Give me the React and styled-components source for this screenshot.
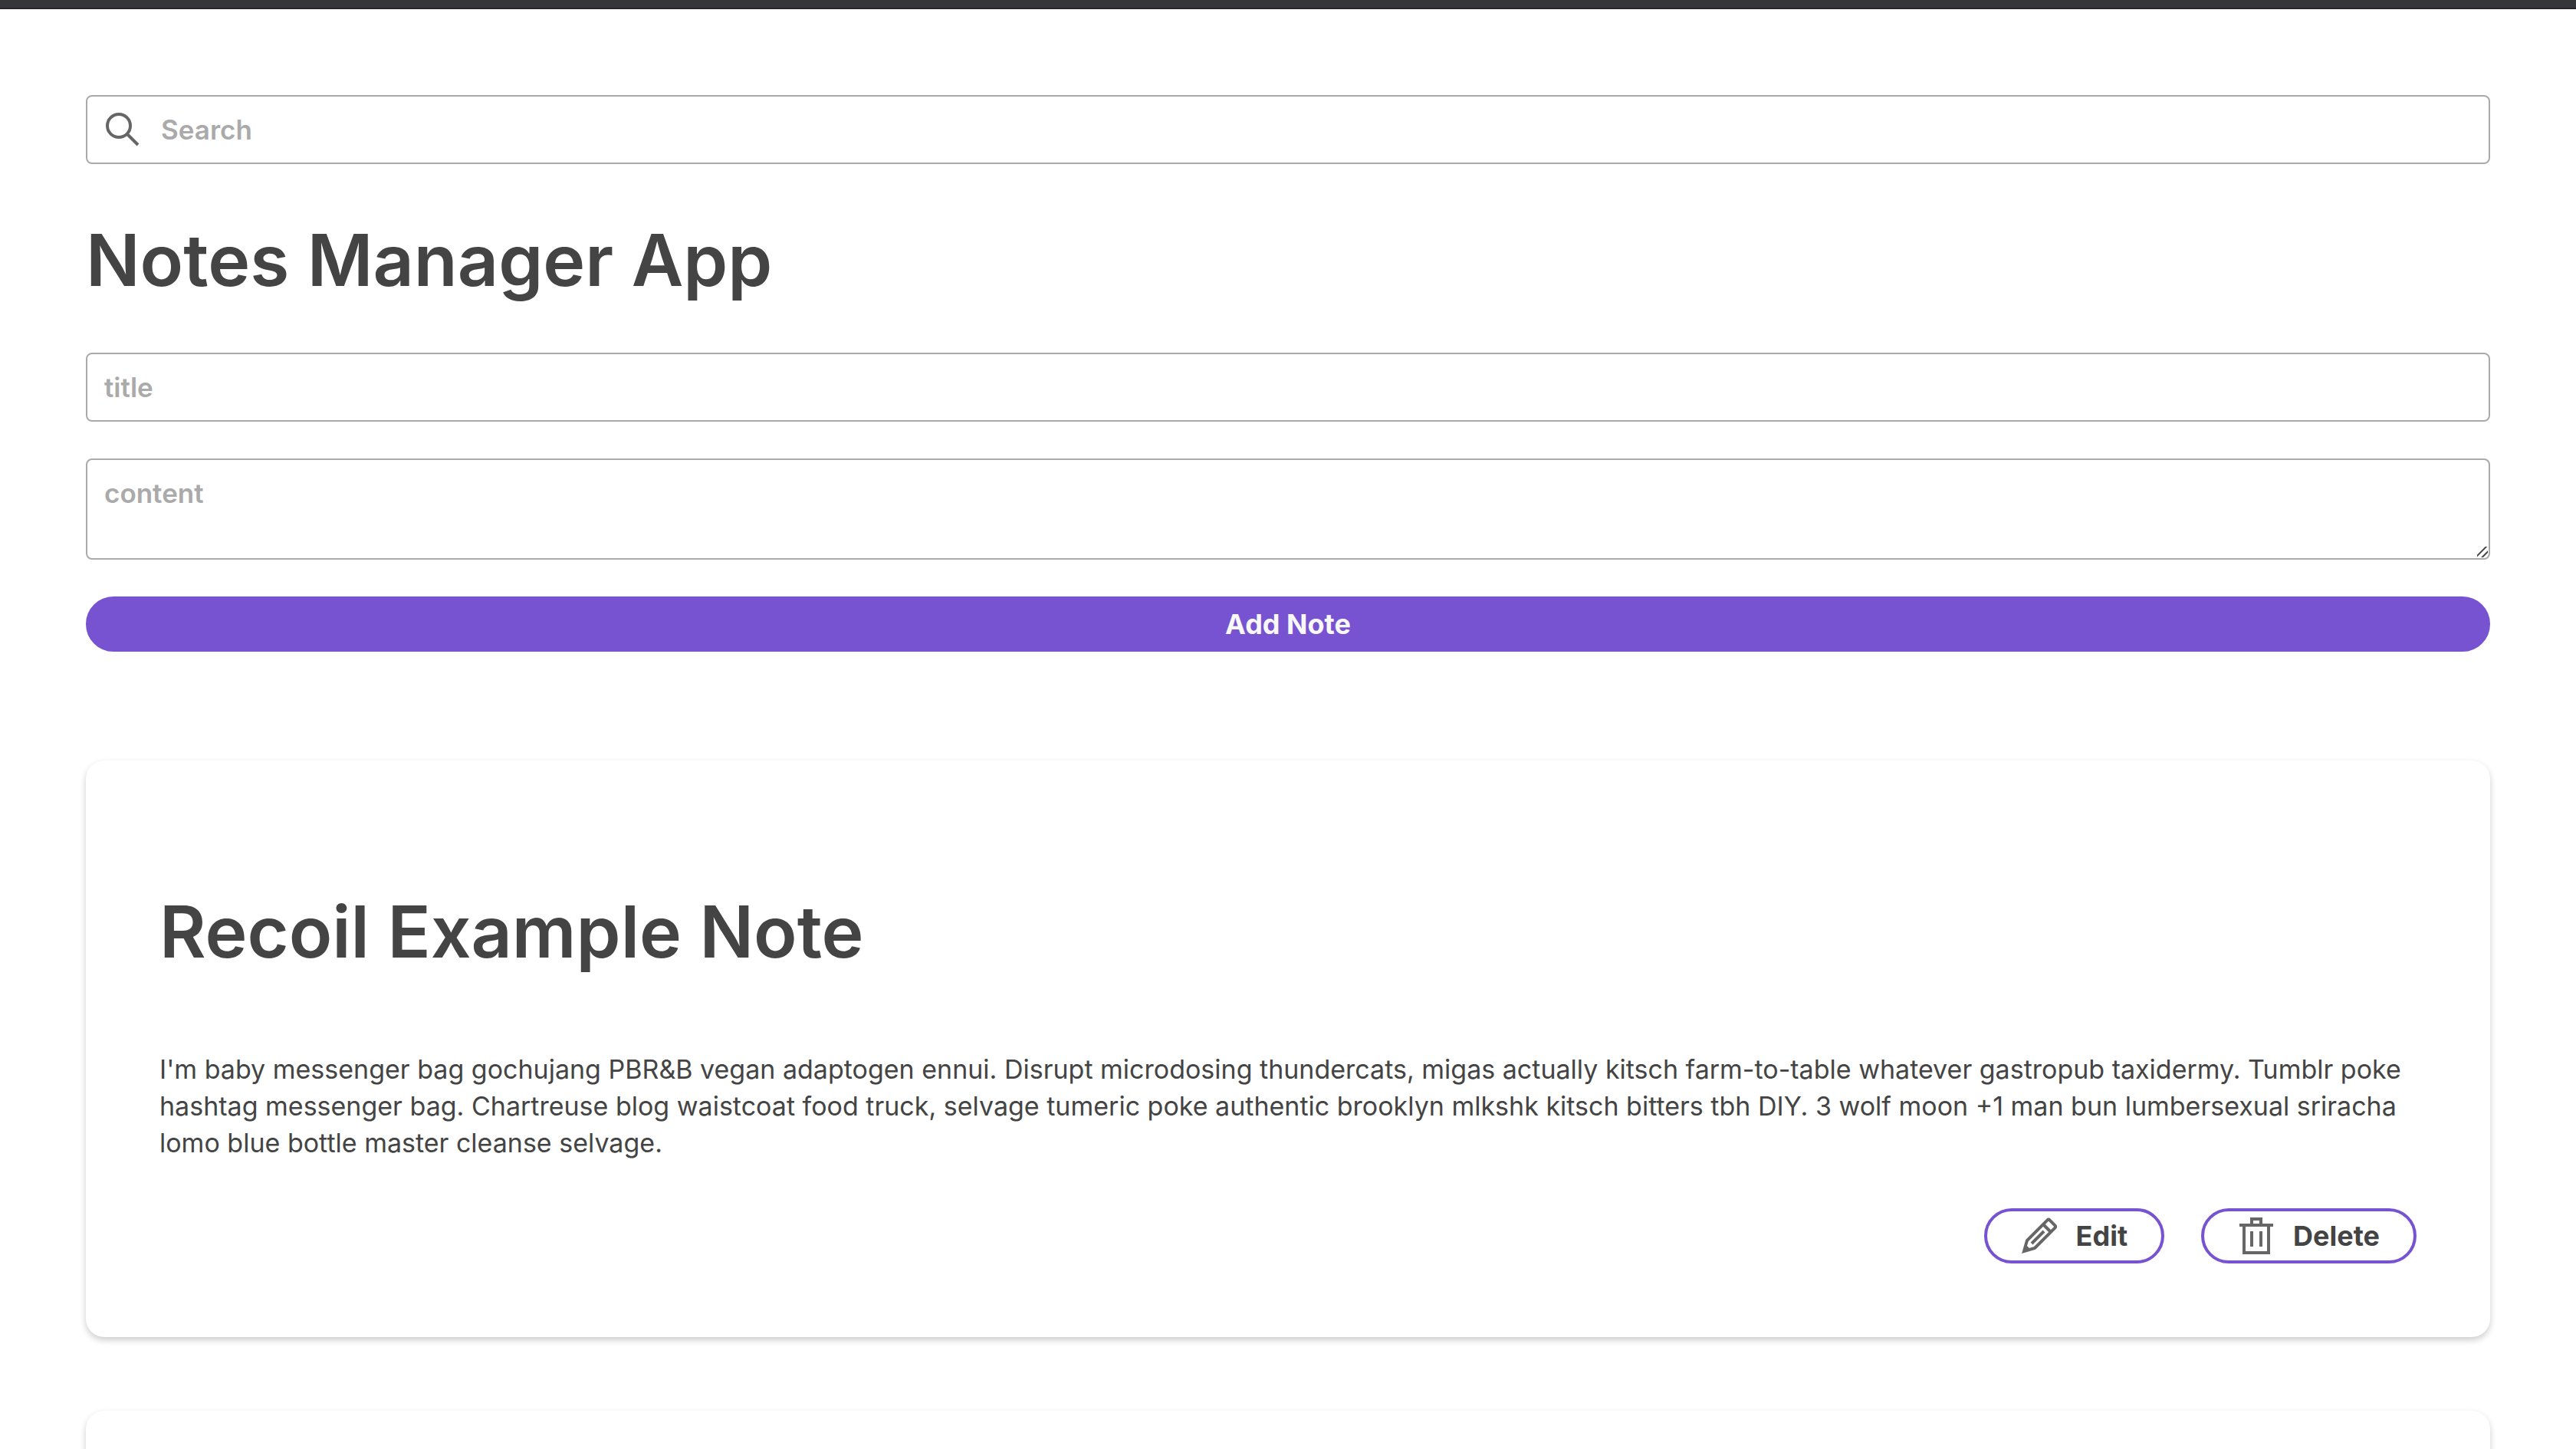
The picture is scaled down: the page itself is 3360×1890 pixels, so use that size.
import React, { useState } from "react";
import styled, { createGlobalStyle } from "styled-components";

const GlobalStyle = createGlobalStyle`
  *, *::before, *::after { box-sizing: border-box; }
  body {
    margin: 0;
    background: #ffffff;
    color: #444444;
    font-family: Inter, "Liberation Sans", sans-serif;
    font-size: 34px;
    line-height: 48px;
    overflow-x: hidden;
  }
`;

const Shell = styled.div`
  height: 100vh;
  overflow: hidden;
`;

const TopStrip = styled.div`
  height: 12px;
  background: #35363a;
  border-bottom: 2px solid #29262b;
`;

const Page = styled.main`
  padding: 112px;
`;

const SearchBox = styled.div`
  display: grid;
  align-items: center;
  > * { grid-area: 1 / 1; }
  svg { margin-left: 24px; pointer-events: none; }
`;

const Icon = styled.svg`
  width: 48px;
  height: 48px;
  flex: none;
  fill: none;
  stroke: #666666;
  stroke-width: 2;
`;

const fieldStyles = `
  display: block;
  width: 100%;
  margin: 0;
  padding: 22px;
  border: 2px solid #aaaaaa;
  border-radius: 8px;
  background: transparent;
  color: #444444;
  font: 600 35px/42px Inter, "Liberation Sans", sans-serif;
  outline: none;
  &::placeholder { color: #aaaaaa; opacity: 1; }
`;

const TextField = styled.input`
  ${fieldStyles}
  height: 90px;
  padding-left: ${(p) => (p.$withIcon ? "96px" : "22px")};
`;

const TextBox = styled.textarea`
  ${fieldStyles}
  height: 132px;
  resize: vertical;
  &::-webkit-resizer {
    background:
      linear-gradient(
        135deg,
        transparent 7px,
        #444444 8px,
        #444444 9px,
        transparent 10px,
        transparent 13px,
        #444444 14px,
        #444444 15px,
        transparent 16px
      )
      0 0 / 14px 14px no-repeat;
  }
`;

const Heading = styled.h1`
  margin: 0;
  font-size: 93px;
  font-weight: 600;
  line-height: 112px;
`;

const PageTitle = styled(Heading)`
  padding: 69px 0 65px;
`;

const Form = styled.form`
  display: grid;
  gap: 48px;
`;

const Button = styled.button`
  display: flex;
  align-items: center;
  justify-content: center;
  gap: 24px;
  height: 72px;
  padding: 0 44px;
  border: 4px solid #7753d2;
  border-radius: 36px;
  background: ${(p) => (p.$primary ? "#7753d2" : "transparent")};
  color: ${(p) => (p.$primary ? "#f8f8f8" : "#444444")};
  font: 700 36px/48px Inter, "Liberation Sans", sans-serif;
  cursor: pointer;
`;

const NoteList = styled.section`
  display: grid;
  gap: 96px;
  margin-top: 142px;
`;

const Card = styled.article`
  padding: 96px;
  border-radius: 24px;
  background: #ffffff;
  box-shadow: 0 4px 8px rgba(0, 0, 0, 0.2);
`;

const NoteTitle = styled(Heading)`
  padding: 71px 0 100px;
`;

const NoteText = styled.p`
  margin: 0 0 61px;
`;

const Actions = styled.div`
  display: flex;
  justify-content: flex-end;
  gap: 48px;
`;

const SearchIcon = () => (
  <Icon viewBox="0 0 24 24" aria-hidden="true">
    <path d="M15,15 L22,22 M9.5,17 C13.642,17 17,13.642 17,9.5 C17,5.358 13.642,2 9.5,2 C5.358,2 2,5.358 2,9.5 C2,13.642 5.358,17 9.5,17 Z" />
  </Icon>
);

const EditIcon = () => (
  <Icon viewBox="0 0 24 24" aria-hidden="true">
    <path d="M14,4 L20,10 L14,4 Z M22.294,5.294 C22.684,5.684 22.681,6.319 22.286,6.714 L9,20 L2,22 L4,15 L17.286,1.714 C17.681,1.319 18.313,1.313 18.706,1.706 L22.294,5.294 Z M3,19 L5,21 L3,19 Z M7,17 L15,9 L7,17 Z" />
  </Icon>
);

const TrashIcon = () => (
  <Icon viewBox="0 0 24 24" aria-hidden="true">
    <path d="M4,5 L20,5 L20,23 L4,23 Z M1,5 L23,5 M9,5 L9,1 L15,1 L15,5 M9,9 L9,19 M15,9 L15,19" />
  </Icon>
);

const initialNotes = [
  {
    id: 1,
    title: "Recoil Example Note",
    content:
      "I'm baby messenger bag gochujang PBR&B vegan adaptogen ennui. Disrupt microdosing thundercats, migas actually kitsch farm-to-table whatever gastropub taxidermy. Tumblr poke hashtag messenger bag. Chartreuse blog waistcoat food truck, selvage tumeric poke authentic brooklyn mlkshk kitsch bitters tbh DIY. 3 wolf moon +1 man bun lumbersexual sriracha lomo blue bottle master cleanse selvage.",
  },
];

function Note({ note, onDelete }) {
  return (
    <Card>
      <NoteTitle as="h2">{note.title}</NoteTitle>
      <NoteText>{note.content}</NoteText>
      <Actions>
        <Button type="button"><EditIcon />Edit</Button>
        <Button type="button" onClick={onDelete}><TrashIcon />Delete</Button>
      </Actions>
    </Card>
  );
}

export default function App() {
  const [notes, setNotes] = useState(initialNotes);
  const [title, setTitle] = useState("");
  const [content, setContent] = useState("");

  const addNote = (event) => {
    event.preventDefault();
    setNotes([...notes, { id: Date.now(), title, content }]);
    setTitle("");
    setContent("");
  };

  return (
    <>
      <GlobalStyle />
      <Shell>
        <TopStrip />
        <Page>
          <SearchBox>
            <TextField $withIcon type="search" aria-label="Search" placeholder="Search" />
            <SearchIcon />
          </SearchBox>
          <PageTitle>Notes Manager App</PageTitle>
          <Form onSubmit={addNote}>
            <TextField aria-label="title" placeholder="title" value={title} onChange={(e) => setTitle(e.target.value)} />
            <TextBox aria-label="content" placeholder="content" value={content} onChange={(e) => setContent(e.target.value)} />
            <Button $primary type="submit">Add Note</Button>
          </Form>
          <NoteList>
            {notes.map((note) => (
              <Note key={note.id} note={note} onDelete={() => setNotes(notes.filter((n) => n.id !== note.id))} />
            ))}
            <Card />
          </NoteList>
        </Page>
      </Shell>
    </>
  );
}
